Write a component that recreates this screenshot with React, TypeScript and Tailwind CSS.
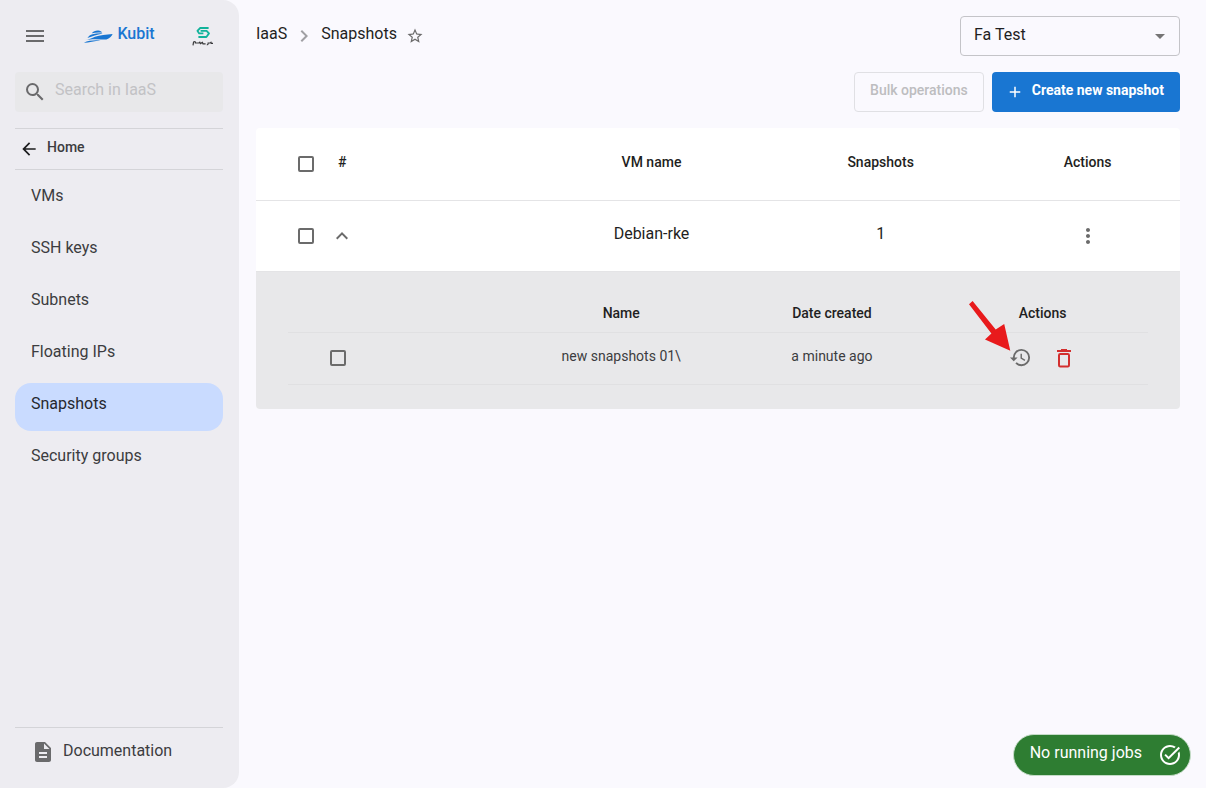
import React, { useState } from 'react';
import {
  MdMenu,
  MdSearch,
  MdArrowBack,
  MdStarBorder,
  MdChevronRight,
  MdArrowDropDown,
  MdAdd,
  MdExpandLess,
  MdMoreVert,
  MdHistory,
  MdDescription,
  MdTaskAlt,
} from 'react-icons/md';

const navItems = ['VMs', 'SSH keys', 'Subnets', 'Floating IPs', 'Snapshots', 'Security groups'];

const KubitMark: React.FC = () => (
  <svg className="w-[30px] h-4" viewBox="0 0 30 16" fill="#1976d2" aria-hidden="true">
    <path d="M1.5 12.2C5 12 8 10.4 12 8.8C17 7 23 6.8 29.6 6C28.6 8.2 26.6 10.4 23.4 11.6C16 11.2 9 10.6 1.5 12.2Z" />
    <path d="M4.4 10C5.6 8 7.4 6.8 9.6 6.2C12.8 5.4 16.4 5.2 19.6 5.4C13.6 6.4 9.6 8.4 4.4 10Z" />
    <path d="M8.8 5.2C10.4 3.4 12.6 2.4 15.4 2.6C17.2 2.8 18.4 3.6 19.2 4.6C15.6 4.4 12 4.4 8.8 5.2Z" />
    <path d="M.8 14.8C5.6 12.4 12 12 17.6 12.6C11.6 12.8 6 14.8 .8 14.8Z" />
  </svg>
);

const PartnerMark: React.FC = () => (
  <svg className="w-6 h-6" viewBox="0 0 24 24" fill="none" aria-hidden="true">
    <path d="M17.6 4H9.2L6.4 6.8L8.2 9.4H12.4M9.6 6.8H15.6L18 9.4L15.4 13H7.4" stroke="#12b39b" strokeWidth="1.8" strokeLinejoin="round" />
    <path d="M2 21.4L2.6 18Q4.8 16.8 4.4 19H8L8.8 18.2L9.4 19.6L11.4 18.4L12 19.8H14.6M15.8 21Q17.4 20.8 17.2 19H19.4L20 18.4L20.4 19.4H22" stroke="#3a3a3c" strokeWidth="1.2" />
  </svg>
);

const TrashIcon: React.FC = () => (
  <svg className="w-6 h-6" viewBox="0 0 24 24" fill="none" stroke="currentColor" strokeWidth="2" aria-hidden="true">
    <path d="M5 5H19M9 4H15" />
    <rect x="7" y="8" width="10" height="12.4" rx="1.2" />
  </svg>
);

const Sidebar: React.FC = () => {
  const [active, setActive] = useState('Snapshots');

  return (
    <aside className="w-[239px] shrink-0 flex flex-col bg-[#edecf1] rounded-r-2xl pl-[15px] pr-4 text-[#3c3c40]">
      <div className="flex items-center justify-between h-[72px] px-2">
        <button aria-label="Menu" className="text-[#6a6a6c]"><MdMenu size={24} /></button>
        <a href="#" className="flex items-center gap-1 text-[#1976d2] font-medium">
          <KubitMark />
          <span className="pb-1">Kubit</span>
        </a>
        <PartnerMark />
      </div>

      <label className="flex items-center gap-2 h-10 px-2 rounded bg-[#e8e8ea] text-[#6a6a6c]">
        <MdSearch size={24} className="shrink-0" />
        <input type="text" aria-label="Search in IaaS" placeholder="Search in IaaS" className="w-full min-w-0 pb-1 bg-transparent outline-none placeholder:text-[#c2c2c5]" />
      </label>

      <a href="#" className="flex items-center gap-2 h-[42px] mt-4 px-1 border-y border-[#d4d4d8] text-sm font-medium">
        <MdArrowBack size={20} className="text-[#1c1c1e]" />
        <span className="pb-1">Home</span>
      </a>

      <nav className="flex flex-col gap-1 mt-[5px]">
        {navItems.map(item => (
          <a
            key={item}
            href="#"
            onClick={() => setActive(item)}
            className={`flex items-center h-12 px-4 pb-1.5 rounded-2xl ${active === item ? 'bg-[#c9dbff] text-[#26282e]' : ''}`}
          >
            {item}
          </a>
        ))}
      </nav>

      <div className="mt-auto mb-3 border-t border-[#d4d4d8]">
        <a href="#" className="flex items-center gap-2 h-12 px-4">
          <MdDescription size={24} className="text-[#6a6a6c]" />
          <span className="pb-0.5">Documentation</span>
        </a>
      </div>
    </aside>
  );
};

const Check: React.FC<{ label: string }> = ({ label }) => (
  <input type="checkbox" aria-label={label} className="block appearance-none w-4 h-4 rounded-xs border-2 border-[#6b6b6b] checked:bg-[#1976d2]" />
);

const SnapshotRows: React.FC = () => (
  <table className="w-full table-fixed text-sm text-center">
    <colgroup>
      <col className="w-[26.5%]" />
      <col />
      <col />
      <col />
    </colgroup>
    <thead>
      <tr className="h-[45px] border-b border-[#e0e0e2]">
        <th />
        <th className="pt-1.5 font-medium">Name</th>
        <th className="pt-1.5 font-medium">Date created</th>
        <th className="pt-1.5 font-medium">Actions</th>
      </tr>
    </thead>
    <tbody>
      <tr className="h-[52px] border-b border-[#e0e0e2] text-[#3c3c40]">
        <td className="pb-0.5"><div className="pl-[42px]"><Check label="Select new snapshots 01" /></div></td>
        <td className="pb-1.5">new snapshots 01\</td>
        <td className="pb-1.5">a minute ago</td>
        <td className="pb-0.5">
          <div className="flex justify-center gap-5">
            <button aria-label="Restore" className="text-[#6b6b6b]"><MdHistory size={23} /></button>
            <button aria-label="Delete" className="text-[#d32f2f]"><TrashIcon /></button>
          </div>
        </td>
      </tr>
    </tbody>
  </table>
);

const SnapshotTable: React.FC = () => {
  const [open, setOpen] = useState(true);

  return (
    <table className="w-full table-fixed bg-white rounded overflow-hidden text-center">
      <colgroup>
        <col className="w-[68px]" />
        <col />
        <col className="w-[24.8%]" />
        <col className="w-[24.8%]" />
        <col className="w-[20%]" />
      </colgroup>
      <thead>
        <tr className="h-[72px] border-b border-[#e4e4e6] text-sm">
          <th><div className="pl-[42px]"><Check label="Select all" /></div></th>
          <th className="pb-1 pl-3.5 text-left font-medium">#</th>
          <th className="pb-1 font-medium">VM name</th>
          <th className="pb-1 font-medium">Snapshots</th>
          <th className="pb-1 font-medium">Actions</th>
        </tr>
      </thead>
      <tbody>
        <tr className="h-[71px] border-b border-[#e4e4e6]">
          <td><div className="pl-[42px]"><Check label="Select Debian-rke" /></div></td>
          <td className="pl-1.5">
            <button aria-label="Toggle snapshots" onClick={() => setOpen(!open)} className="block text-[#6b6b6b]">
              <MdExpandLess size={24} className={open ? '' : 'rotate-180'} />
            </button>
          </td>
          <td className="pb-1">Debian-rke</td>
          <td className="pb-1">1</td>
          <td>
            <button aria-label="More actions" className="block mx-auto text-[#6b6b6b]"><MdMoreVert size={24} /></button>
          </td>
        </tr>
        {open && (
          <tr className="bg-[#e8e8ea]">
            <td colSpan={5} className="px-8 pt-4 pb-6"><SnapshotRows /></td>
          </tr>
        )}
      </tbody>
    </table>
  );
};

// Red marker pointing at the restore button
const PointerArrow: React.FC = () => (
  <svg className="absolute top-[300px] right-[194px] w-11 h-[52px]" viewBox="0 0 44 52" fill="#e81a1c" aria-hidden="true">
    <path d="M4.6 1L1 4.2L23.4 33.4L17 39.6L42.3 50.8L36.2 24L27.7 29.6Z" />
  </svg>
);

const App: React.FC = () => {
  return (
    <div className="relative flex min-h-screen bg-[#faf9fe] font-[Roboto,sans-serif] text-base text-[#1f1f22]">
      <Sidebar />

      <main className="flex-1 min-w-0 pl-[17px] pr-[26px] pt-4">
        <div className="flex justify-between items-start">
          <div className="flex items-center h-10 gap-[5px]">
            <a href="#" className="pb-1">IaaS</a>
            <MdChevronRight size={24} className="text-[#a0a0a4]" />
            <span className="pb-1">Snapshots</span>
            <button aria-label="Add to favourites" className="ml-1 text-[#6b6b6b]"><MdStarBorder size={18} /></button>
          </div>
          <div className="relative w-[220px]">
            <select aria-label="Project" className="w-full h-10 pl-[13px] pb-0.5 appearance-none rounded border border-[#c4c4c8] bg-transparent">
              <option>Fa Test</option>
            </select>
            <MdArrowDropDown size={24} className="absolute right-2 top-2 text-[#757575] pointer-events-none" />
          </div>
        </div>

        <div className="flex justify-end gap-2 my-4 text-sm">
          <button disabled className="h-10 px-[15px] pb-1 rounded border border-[#e0e0e4] font-medium text-[#bdbdc0]">Bulk operations</button>
          <button className="flex items-center gap-2 h-10 pl-3.5 pr-4 rounded bg-[#1976d2] text-white font-bold">
            <MdAdd size={18} />
            <span className="pb-1">Create new snapshot</span>
          </button>
        </div>

        <SnapshotTable />
      </main>

      <PointerArrow />

      <button className="fixed right-[15px] bottom-3 flex items-center gap-4 h-[42px] pl-4 pr-2 rounded-full border border-[#c5dcc8] bg-[#2e7d32] text-white">
        <span className="pb-1">No running jobs</span>
        <MdTaskAlt size={24} />
      </button>
    </div>
  );
};

export default App;
